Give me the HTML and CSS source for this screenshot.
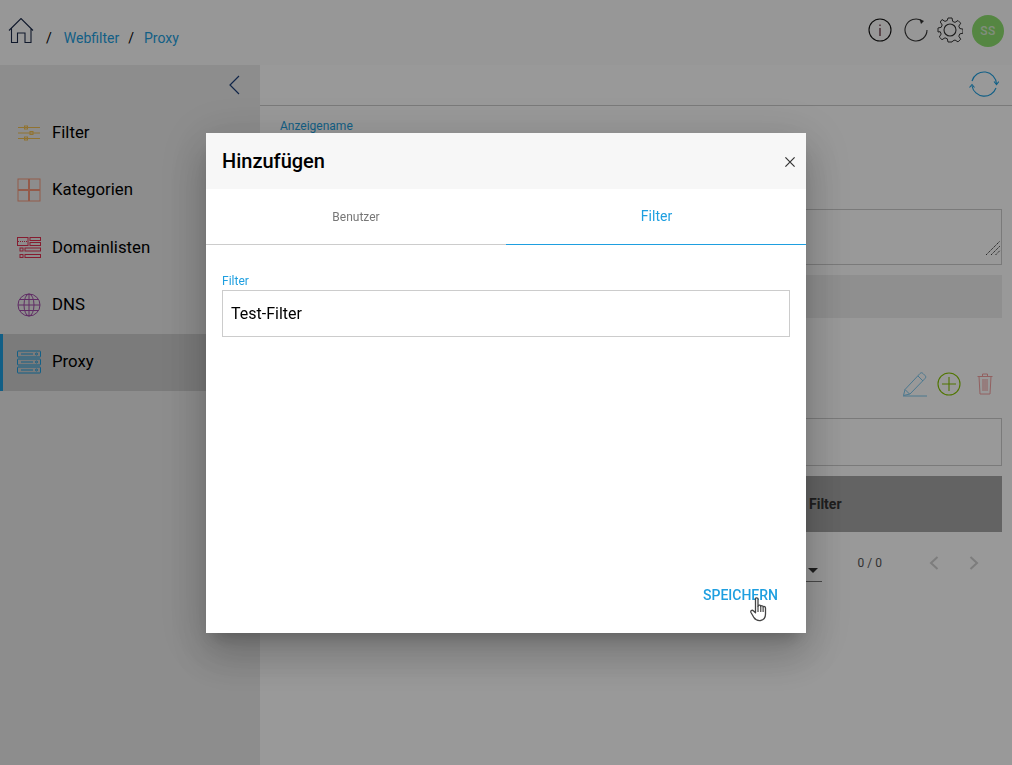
FILE: index.html
```html
<!DOCTYPE html>
<html lang="de">
<head>
<meta charset="utf-8">
<title>Webfilter Proxy</title>
<link rel="stylesheet" href="styles.css">
</head>
<body>
<div class="app">
  <header class="topbar">
    <nav class="crumbs">
      <svg class="home" viewBox="0 0 26 26" width="26" height="26" fill="none"><path d="M1 12.500 13 .5 25 12.500M3.500 10.500V24.500H9.500V15H17V24.500H23V10.500" stroke="#1c2a4a" stroke-width="1.1"/></svg>
      <span class="sep first">/</span><a class="crumb">Webfilter</a><span class="sep">/</span><a class="crumb">Proxy</a>
    </nav>
    <div class="actions">
      <svg class="info" width="24" height="24" viewBox="0 0 24 24" fill="none"><circle cx="12" cy="12" r="11" stroke="#111" stroke-width="1.1"/><path d="M12 10v8M12 6.500v1.500" stroke="#5a2030" stroke-width="1.2"/></svg>
      <svg width="24" height="24" viewBox="0 0 24 24" fill="none"><path d="M18 2.800A11 11 0 1 0 23 12" stroke="#333" stroke-width="1.1"/><path d="M15.500 1 20 3 17 6z" fill="#333"/></svg>
      <svg width="26" height="26" viewBox="0 0 26 26" fill="none"><circle cx="13" cy="13" r="6" stroke="#333" stroke-width="1.1"/><path d="M11 1h4l.7 3.400 2.300 1 3-1.900 2.700 2.700-1.900 3 1 2.300 3.200.7v4l-3.200.700-1 2.300 1.900 3-2.700 2.700-3-1.900-2.300 1L15 25h-4l-.7-3.200-2.300-1-3 1.900-2.700-2.700 1.900-3-1-2.300L1 15v-4l3.200-.7 1-2.300-1.900-3L5 2.500l3 1.900 2.300-1z" stroke="#333" stroke-width="1"/></svg>
      <div class="avatar">SS</div>
    </div>
  </header>
  <div class="body">
    <aside class="sidebar">
      <div class="collapse"><svg width="12" height="20" viewBox="0 0 12 20" fill="none"><path d="M11 1 2 10l9 9" stroke="#1c3f7a" stroke-width="1.2"/></svg></div>
      <ul class="menu">
        <li class="item">
          <svg class="ico" viewBox="0 0 24 24" fill="none" stroke="#f2c050" stroke-width="1"><path d="M1 6.500h22M1 12h22M1 17.500h22"/><rect x="7.500" y="5" width="3" height="3"/><rect x="13" y="10.500" width="3" height="3"/><rect x="7.500" y="16" width="3" height="3"/></svg>
          <span>Filter</span>
        </li>
        <li class="item">
          <svg class="ico" viewBox="0 0 24 24" fill="none" stroke="#f5987c" stroke-width="1"><rect x="1" y="1" width="10.500" height="10.500"/><rect x="12.500" y="1" width="10.500" height="10.500"/><rect x="1" y="12.500" width="10.500" height="10.500"/><rect x="12.500" y="12.500" width="10.500" height="10.500"/></svg>
          <span>Kategorien</span>
        </li>
        <li class="item">
          <svg class="ico" viewBox="0 0 24 24" fill="none" stroke="#e03050" stroke-width="1"><rect x=".5" y="1.500" width="10.500" height="8"/><path d="M1 5.500h9" stroke-dasharray="1 1"/><rect x="13" y="1.500" width="10.500" height="3"/><rect x="13" y="6.500" width="10.500" height="3"/><rect x="3" y="12" width="3" height="3"/><rect x="8" y="12" width="15.500" height="3"/><rect x="3" y="18.500" width="3" height="3"/><rect x="8" y="18.500" width="15.500" height="3"/></svg>
          <span>Domainlisten</span>
        </li>
        <li class="item">
          <svg class="ico" viewBox="0 0 24 24" fill="none" stroke="#a04aa8" stroke-width="1"><circle cx="12" cy="12" r="11"/><ellipse cx="12" cy="12" rx="5" ry="11"/><path d="M12 1v22M1 12h22M2.500 6.500h19M2.500 17.500h19"/></svg>
          <span>DNS</span>
        </li>
        <li class="item active">
          <svg class="ico" viewBox="0 0 24 24" fill="none" stroke="#1e9fe0" stroke-width="1"><rect x=".5" y="1" width="23" height="6" rx=".5"/><rect x=".5" y="9" width="23" height="6" rx=".5"/><rect x=".5" y="17" width="23" height="6" rx=".5"/><path d="M4 4h12M4 12h12M4 20h12"/><circle cx="19.500" cy="4" r="1"/><circle cx="19.500" cy="12" r="1"/><circle cx="19.500" cy="20" r="1"/></svg>
          <span>Proxy</span>
        </li>
      </ul>
    </aside>
    <main class="content">
      <div class="toolbar">
        <svg width="30" height="28" viewBox="0 0 30 28" fill="none" stroke="#1e9fe0" stroke-width="1.100"><path d="M3 10A12.500 12.500 0 0 1 27.500 13"/><path d="M27 17A12.500 12.500 0 0 1 3 15"/><path d="M25 10.500l2.500 3 2.300-3M.5 16.500l2.500-3 2.500 3"/></svg>
      </div>
      <div class="form">
        <label class="top-label">Anzeigename</label>
        <div class="spacer-a"></div>
        <div class="area-wrap">
          <textarea class="area" aria-label="Beschreibung"></textarea>
          <svg class="grip" width="16" height="16" viewBox="0 0 16 16" fill="none" stroke="#444" stroke-width="1" stroke-dasharray="1.500 .7"><path d="M1 15 15 1M6 15 15 6M10.500 15 15 10.500"/></svg>
        </div>
        <div class="band"></div>
        <div class="tools">
          <svg width="26" height="26" viewBox="0 0 26 26" fill="none" stroke="#7ec8ee" stroke-width="1"><path d="M1 25h24M1.500 24.500l1.500-6L18 2.500c1-1 2-1 3 0l2 2c1 1 1 2 0 3L8 23z"/><path d="M3 18.500 7.500 23M16 5l5 5"/></svg>
          <svg width="24" height="24" viewBox="0 0 24 24" fill="none" stroke="#86c400" stroke-width="1.100"><circle cx="12" cy="12" r="11"/><path d="M12 5v14M5 12h14"/></svg>
          <svg class="trash" width="16" height="22" viewBox="0 0 16 22" fill="none" stroke="#f4a0a0" stroke-width="1"><path d="M.5 3.500h15M5.500 3.500V1h5v2.500M2 3.500 3 21h10l1-17.500M6 6v12M8 6v12M10 6v12"/></svg>
        </div>
        <div class="search"></div>
        <div class="thead"><span>Filter</span></div>
        <div class="pager">
          <div class="select"><i class="caret"></i></div>
          <span class="count">0 / 0</span>
          <svg width="10" height="14" viewBox="0 0 10 14" fill="none" stroke="#d0d0d0" stroke-width="2"><path d="M8.500 1 2 7l6.500 6"/></svg>
          <svg width="10" height="14" viewBox="0 0 10 14" fill="none" stroke="#d0d0d0" stroke-width="2"><path d="M1.500 1 8 7l-6.500 6"/></svg>
        </div>
      </div>
    </main>
  </div>
</div>

<div class="overlay">
  <section class="dialog">
    <div class="dialog-head">
      <h2>Hinzufügen</h2>
      <svg class="close" width="10" height="10" viewBox="0 0 10 10" fill="none" stroke="#333" stroke-width="1.200"><path d="M.4.400l9.200 9.200M9.600.400.400 9.600"/></svg>
    </div>
    <div class="tabs">
      <div class="tab">Benutzer</div>
      <div class="tab selected">Filter</div>
    </div>
    <div class="dialog-body">
      <label class="field-label">Filter</label>
      <div class="field">Test-Filter</div>
    </div>
    <div class="dialog-foot">
      <button class="save">SPEICHERN</button>
      <svg class="hand" width="18" height="25" viewBox="0 0 18 25"><path d="M5.500 2c0-1.600 2.500-1.600 2.500 0v7l.5-.5c.8-.6 2-.4 2.300.5.800-.6 2-.3 2.300.7.900-.5 2.400 0 2.400 1.300v6c0 3.500-2 6-5 6.500-3 .3-5-.5-6.500-2.800L1 15.500c-.8-1.500 1-3 2.300-1.800l2.200 2z" fill="#fff" stroke="#444" stroke-width="1.300" stroke-linejoin="round"/><path d="M8 9v6M10.800 9v6M13.100 10v5" stroke="#222" stroke-width="1"/></svg>
    </div>
  </section>
</div>
</body>
</html>
```
FILE: styles.css
```css
* { box-sizing: border-box; }
html, body { margin: 0; height: 100%; }
body { font-family: Roboto, "Liberation Sans", sans-serif; color: #000; overflow: hidden; background: #fff; }
svg { display: block; flex: none; }

.app { display: flex; flex-direction: column; height: 765px; }
.topbar { height: 65px; flex: none; display: flex; align-items: center; justify-content: space-between; background: #fcfcfc; padding: 0 8px; }
.crumbs { display: flex; align-items: center; font-size: 14px; }
.home { margin-top: -3px; }
.crumb { color: #1e9fe0; margin-top: 11px; }
.sep { margin: 11px 10px 0 9px; }
.sep.first { margin: 11px 12px 0 12px; }
.actions { display: flex; align-items: center; gap: 9px; margin-top: -4px; }
.actions svg { margin-top: -2px; }
.actions .info { margin-right: 3px; }
.avatar { width: 32px; height: 32px; border-radius: 50%; background: #8ee06f; color: #d8ecd0; font-size: 12px; font-weight: 500; letter-spacing: .5px; display: flex; align-items: center; justify-content: center; }

.body { flex: 1; display: flex; min-height: 0; }
.sidebar { width: 260px; flex: none; background: #ebebeb; }
.collapse { height: 39.500px; display: flex; align-items: center; justify-content: flex-end; padding: 0 20px 0 0; }
.menu { list-style: none; margin: 0; padding: 0; }
.item { height: 57.250px; display: flex; align-items: center; gap: 11px; padding-left: 17px; font-size: 16.800px; }
.item span { margin-top: -2px; }
.item.active { background: #cdcdcd; border-left: 3px solid #1e9fe0; padding-left: 14px; }
.ico { width: 24px; height: 24px; }

.content { flex: 1; background: #fff; min-width: 0; }
.toolbar { height: 41px; border-bottom: 1px solid #ccc; display: flex; align-items: center; justify-content: flex-end; padding: 0 13px 0 0; }
.form { padding: 13px 10px 0 20px; }
.top-label { display: block; font-size: 12px; color: #1e9fe0; line-height: 14px; }
.spacer-a { height: 76px; }
.area-wrap { position: relative; }
.area { display: block; width: 100%; height: 56px; border: 1px solid #ccc; background: #fff; margin: 0; outline: 0; resize: none; }
.grip { position: absolute; right: 1px; bottom: 9px; }
.band { height: 43px; margin-top: 10px; background: #eee; }
.tools { height: 100px; display: flex; align-items: center; justify-content: flex-end; gap: 9px; padding: 32px 9px 0 0; }
.trash { margin-left: 7px; }
.search { height: 48px; border: 1px solid #ccc; }
.thead { height: 56px; margin-top: 10px; background: #a6a6a6; display: flex; align-items: center; padding-left: 529px; font-size: 14px; font-weight: 700; color: #333; }
.pager { height: 62px; display: flex; align-items: center; justify-content: flex-end; padding-right: 23px; font-size: 12px; color: #555; }
.select { width: 60px; height: 32px; border-bottom: 1px solid #777; margin: 5px 36px 0 0; position: relative; }
.caret { position: absolute; right: 4px; bottom: 8px; border-left: 5px solid transparent; border-right: 5px solid transparent; border-top: 5px solid #333; }
.count { margin-right: 47px; }
.pager svg + svg { margin-left: 30px; }

.overlay { position: fixed; inset: 0; background: rgba(0,0,0,.4); display: flex; align-items: center; justify-content: center; }
.dialog { width: 600px; height: 500px; background: #fff; display: flex; flex-direction: column; box-shadow: 0 11px 15px -7px rgba(0,0,0,.2), 0 24px 38px 3px rgba(0,0,0,.14), 0 9px 46px 8px rgba(0,0,0,.12); }
.dialog-head { height: 56px; flex: none; background: #f7f7f7; display: flex; align-items: center; justify-content: space-between; padding: 0 11px 0 16px; }
.dialog-head h2 { margin: 0; font-size: 20px; font-weight: 500; }
.close { margin-top: 2px; }
.tabs { display: flex; height: 56px; flex: none; }
.tab { flex: 0 0 50%; display: flex; align-items: center; justify-content: center; padding-top: 1px; font-size: 12px; color: #777; border-bottom: 1px solid #ccc; }
.tab.selected { color: #1e9fe0; border-bottom-color: #1e9fe0; font-size: 14px; padding: 0 0 0 1px; }
.dialog-body { padding: 29px 16px 0; flex: 1; }
.field-label { display: block; font-size: 12px; line-height: 14px; color: #1e9fe0; margin-bottom: 2px; }
.field { height: 47px; border: 1px solid #ccc; font-size: 16px; padding: 0 8px; display: flex; align-items: center; }
.dialog-foot { height: 76px; flex: none; display: flex; justify-content: flex-end; align-items: flex-start; padding: 0 28px 0 0; position: relative; }
.save { background: none; border: 0; padding: 0; margin-top: 30px; font: 500 14px Roboto, sans-serif; color: #1e9fe0; }
.hand { position: absolute; left: 544px; top: 40px; }
```
